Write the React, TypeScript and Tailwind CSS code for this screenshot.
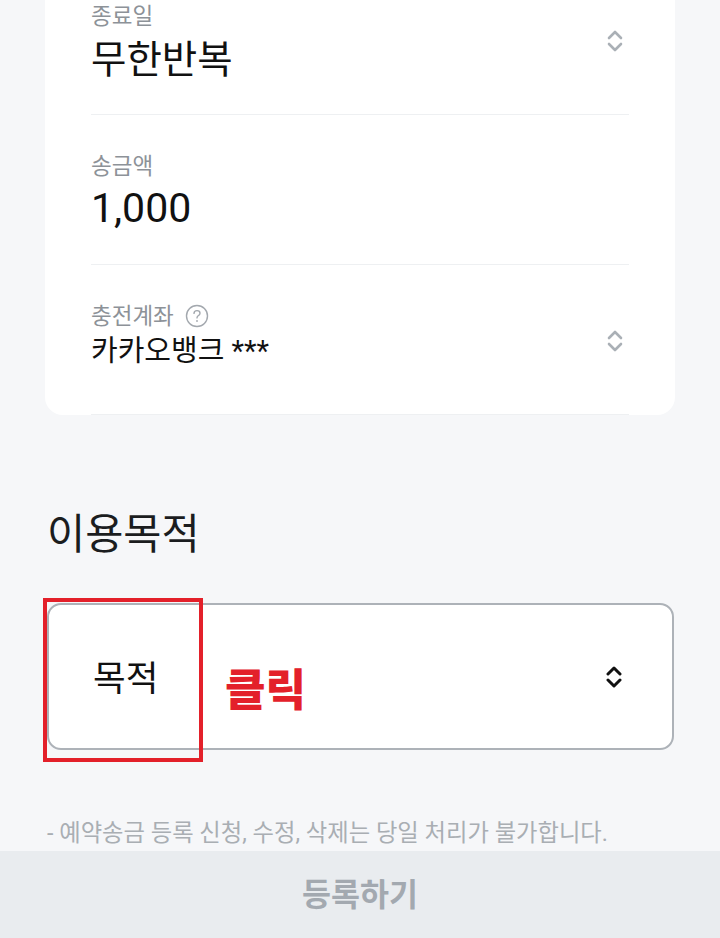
import type { ReactNode } from 'react'

const FONT = 'Roboto, "Noto Sans CJK KR", "Noto Sans", sans-serif'

function UpDown({ color, stroke }: { color: string; stroke: number }) {
    return (
        <svg width="16" height="26" viewBox="0 0 16 26" fill="none">
            <path d="M2 10 L8 4 L14 10" stroke={color} strokeWidth={stroke} strokeLinecap="round" strokeLinejoin="round" />
            <path d="M2 16 L8 22 L14 16" stroke={color} strokeWidth={stroke} strokeLinecap="round" strokeLinejoin="round" />
        </svg>
    )
}

function HelpIcon() {
    return (
        <svg width="24" height="24" viewBox="0 0 24 24" fill="none">
            <circle cx="12" cy="12" r="10.5" stroke="#a3a8ae" strokeWidth="1.4" />
            <path
                d="M9 9.4 C9 7.6 10.4 6.6 12 6.6 C13.7 6.6 15 7.7 15 9.2 C15 10.6 14 11.2 13.1 11.8 C12.4 12.3 12 12.8 12 13.9"
                stroke="#a3a8ae"
                strokeWidth="1.4"
                strokeLinecap="round"
            />
            <circle cx="12" cy="17" r="0.9" fill="#a3a8ae" />
        </svg>
    )
}

interface RowProps {
    label: ReactNode
    value: ReactNode
    valueClass: string
    chevron?: boolean
}

function Row({ label, value, valueClass, chevron }: RowProps) {
    return (
        <div className="h-[150px] flex justify-between border-b border-[#eef0f2]">
            <div className="pt-[37px]">
                <div className="flex items-center gap-[11px] text-[22.5px] leading-[28px] text-[#8d9298]">{label}</div>
                <div className={valueClass}>{value}</div>
            </div>
            {chevron && (
                <div className="self-center mt-[3px] mr-[6px]">
                    <UpDown color="#aab0b6" stroke={2.6} />
                </div>
            )}
        </div>
    )
}

export default function App() {
    return (
        <div className="w-[720px] h-[938px] overflow-hidden bg-[#f6f7f9] flex flex-col" style={{ fontFamily: FONT }}>
            <div className="flex-1 px-[45px]">
                {/* info card, its top scrolled off screen */}
                <div className="-mt-[35px] bg-white rounded-[18px] px-[46px]">
                    <Row
                        label="종료일"
                        value="무한반복"
                        valueClass="mt-[9px] text-[38.5px] leading-[42px] text-[#111]"
                        chevron
                    />
                    <Row
                        label="송금액"
                        value="1,000"
                        valueClass="mt-[7px] text-[41px] leading-[42px] text-[#111]"
                    />
                    <Row
                        label={
                            <>
                                <span>충전계좌</span>
                                <HelpIcon />
                            </>
                        }
                        value="카카오뱅크 ***"
                        valueClass="mt-[4px] text-[29px] leading-[34px] text-[#111]"
                        chevron
                    />
                </div>

                <h2 className="mt-[98px] ml-[2px] text-[41.5px] leading-[44px] text-[#1b1d1f]">이용목적</h2>

                {/* purpose select */}
                <div className="relative mt-[46px] ml-[2px] w-[627px] h-[147px] bg-white border-2 border-[#adb2b8] rounded-[14px] flex items-center justify-between pl-[44px] pr-[50px]">
                    <span className="text-[35.5px] leading-[40px] text-[#111] mt-[4px]">목적</span>
                    <UpDown color="#111" stroke={3} />

                    {/* annotation */}
                    <div className="absolute -left-[6px] -top-[7px] w-[160px] h-[164px] border-4 border-[#e3202a]" />
                    <span className="absolute left-[176px] top-[60px] text-[44px] leading-[52px] font-black text-[#e3202a]">
                        클릭
                    </span>
                </div>

                <p className="mt-[68px] ml-[2px] text-[23.3px] leading-[30px] text-[#a9aeb3] whitespace-nowrap">
                    - 예약송금 등록 신청, 수정, 삭제는 당일 처리가 불가합니다.
                </p>
            </div>

            <div className="h-[87px] shrink-0 bg-[#e9ecef] flex items-center justify-center">
                <span className="text-[31.5px] leading-[36px] font-bold text-[#a3a9b0] mt-[2px]">등록하기</span>
            </div>
        </div>
    )
}
